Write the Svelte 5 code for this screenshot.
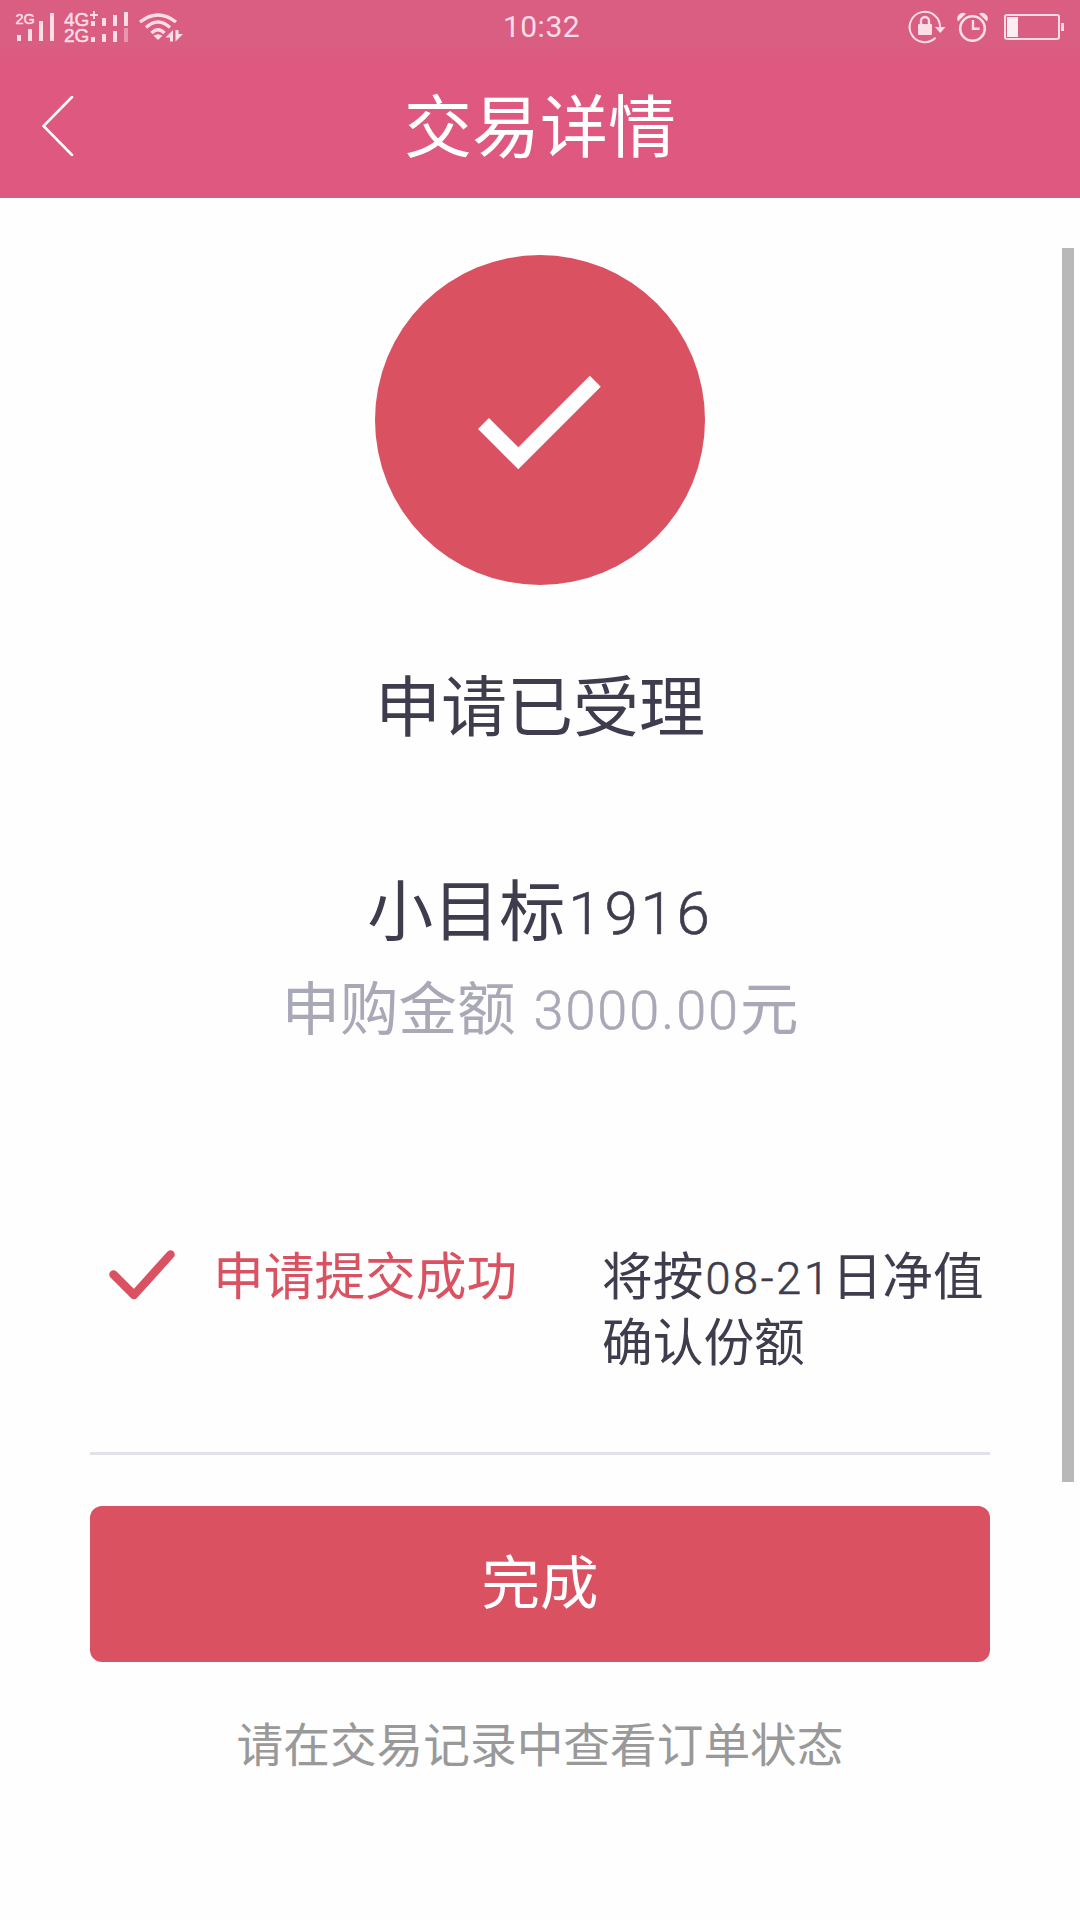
<script>
  const order = {
    name: '小目标',
    code: '1916',
    amount: '3000.00',
  };

  const singleBars = [6, 12, 20, 28];
  const dualBars = [5, 8, 11, 14];
</script>

<div class="page">
  <header>
    <div class="status">
      <svg class="signals" width="200" height="50" viewBox="0 0 200 50">
        <text x="15.500" y="23.500" font-size="14.500">2G</text>
        {#each singleBars as h, i}
          <rect x={17 + i * 11} y={41 - h} width="4" height={h} />
        {/each}
        <text x="64" y="26" font-size="19">4G</text>
        <text x="64" y="42" font-size="19">2G</text>
        <path d="M90 15h8M94 11v8" class="line" stroke-width="1.8" />
        {#each dualBars as h, i}
          <rect x={91 + i * 11} y={26 - h} width="4" height={h} />
          <rect x={91 + i * 11} y={42 - h} width="4" height={h} opacity={i === 3 ? 0.45 : 1} />
        {/each}
        <path d="M140 22Q158 8 176 22M146 27.500Q158 16.500 170 27.500M151.500 33Q158 26.500 164.500 33" class="line" stroke-width="3.4" />
        <path d="M158 40l-4.500-4.200Q158 32.500 162.500 35.800Z" />
        <path d="M165.500 37.500L173 30v11.500h-3v-4zM175.500 30v11.500l7.500-7.500h-4.500v-4z" />
      </svg>
      <span class="time">10:32</span>
      <svg class="icons" width="190" height="50" viewBox="890 0 190 50">
        <path d="M940 28A15.200 15.200 0 1 0 935.500 37.800" class="line" stroke-width="2" />
        <path d="M935 27h10.500l-5.200 6z" />
        <rect x="918" y="24" width="14" height="11" rx="1" />
        <path d="M921 24.500v-3.500a4 4 0 0 1 8 0v3.500" class="line" stroke-width="2.400" />
        <circle cx="972.500" cy="28.500" r="12.300" class="line" stroke-width="2.600" />
        <path d="M973 20v8.700h6.500" class="line" stroke-width="2.400" />
        <path d="M958 21.500a5.800 5.800 0 0 1 8-7.800zM987 21.500a5.800 5.800 0 0 0-8-7.800z" />
        <rect x="1005" y="15" width="54" height="24" rx="2" class="line" stroke-width="2" />
        <rect x="1007" y="17" width="11" height="20" class="charge" />
        <rect x="1061" y="23" width="3" height="8" />
      </svg>
    </div>
    <div class="nav">
      <svg class="back" width="32" height="60" viewBox="0 0 32 60">
        <path d="M30 1L1.500 30l28.500 29" />
      </svg>
      <h1>交易详情</h1>
    </div>
  </header>

  <main>
    <svg class="badge" width="330" height="330" viewBox="0 0 330 330">
      <circle cx="165" cy="165" r="165" />
      <path d="M108.500 168.500L143.300 203.300L220.300 126.300" />
    </svg>

    <h2>申请已受理</h2>
    <div class="name">{order.name}<span class="num">{order.code}</span></div>
    <div class="amount">申购金额<span class="num">{order.amount}</span>元</div>

    <div class="progress">
      <svg class="tick" width="66" height="50" viewBox="0 0 66 50">
        <path d="M4.500 24.500L25 45L61.500 4.500" />
      </svg>
      <div class="done">申请提交成功</div>
      <div class="next">将按<span class="num">08-21</span>日净值<br />确认份额</div>
    </div>

    <button>完成</button>
    <p class="hint">请在交易记录中查看订单状态</p>
    <div class="scrollbar"></div>
  </main>
</div>

<style>
  :global(body) {
    background: #fefefe;
  }

  .page {
    width: 1080px;
    height: 1920px;
    overflow: hidden;
    background: #fefefe;
    color: #3e3c4d;
    font-family: "Noto Sans CJK SC", sans-serif;
    font-weight: 400;
  }

  header {
    height: 198px;
    background: #df587f;
    color: #fff;
  }

  .status {
    display: flex;
    justify-content: space-between;
    height: 60px;
    background: linear-gradient(#d95e82 75%, #df587f);
    color: #fddde8;
  }

  .status svg {
    fill: #fddde8;
  }

  .status text {
    font-family: "Liberation Sans", sans-serif;
    stroke: #fddde8;
    stroke-width: 0.5;
  }

  .status .line {
    fill: none;
    stroke: #fddde8;
  }

  .status .charge {
    fill: #fdeef4;
  }

  .time {
    margin-right: 7px;
    font-family: Roboto, sans-serif;
    font-size: 30px;
    line-height: 54px;
    letter-spacing: 0.5px;
  }

  .nav {
    display: grid;
    grid-template-columns: 120px 1fr 120px;
    align-items: center;
    height: 131px;
  }

  .back {
    margin-left: 42px;
    fill: none;
    stroke: #fff;
    stroke-width: 2.6;
    stroke-linecap: round;
  }

  h1 {
    margin: 0 0 6px;
    font-size: 68px;
    line-height: 100px;
    font-weight: 400;
    text-align: center;
  }

  main {
    position: relative;
    display: flex;
    flex-direction: column;
    align-items: center;
    padding: 57px 90px 0;
  }

  .badge {
    fill: #da5161;
  }

  .badge path {
    fill: none;
    stroke: #fff;
    stroke-width: 15.500;
  }

  h2 {
    margin: 67px 0 0;
    font-size: 66px;
    line-height: 100px;
    font-weight: 400;
  }

  .num {
    font-family: Roboto, sans-serif;
    font-weight: 300;
    line-height: 0;
    vertical-align: 1px;
    -webkit-text-stroke: 0.6px currentColor;
  }

  .name {
    margin-top: 109px;
    font-size: 66px;
    line-height: 90px;
  }

  .name .num {
    margin-left: 3px;
    font-size: 60px;
    letter-spacing: 2.800px;
  }

  .amount {
    margin-top: 9px;
    font-size: 58.500px;
    line-height: 90px;
    color: #a9a8b7;
  }

  .amount .num {
    margin-left: 18px;
    font-size: 54px;
    letter-spacing: 2px;
  }

  .progress {
    display: grid;
    grid-template-columns: 104px 389px 1fr;
    align-items: start;
    box-sizing: border-box;
    width: 900px;
    height: 254px;
    margin-top: 151px;
    padding: 40px 0 0 19px;
    border-bottom: 3px solid #e3e2ea;
    font-size: 50.700px;
    line-height: 65.500px;
  }

  .tick {
    margin-top: 9px;
    fill: none;
    stroke: #da5161;
    stroke-width: 8.500;
    stroke-linecap: round;
    stroke-linejoin: round;
  }

  .done {
    color: #da5161;
  }

  .next {
    white-space: nowrap;
  }

  .next .num {
    margin: 0 0 0 2px;
    font-size: 45px;
    letter-spacing: 2.700px;
  }

  button {
    width: 900px;
    height: 156px;
    margin: 51px 0 0;
    padding: 0 0 12px;
    border: 0;
    border-radius: 12px;
    background: #da5161;
    color: #fff;
    font: inherit;
    font-size: 58.500px;
  }

  .hint {
    margin: 45px 0 0;
    font-size: 46.700px;
    line-height: 70px;
    color: #999;
  }

  .scrollbar {
    position: absolute;
    top: 50px;
    right: 6px;
    width: 12px;
    height: 1234px;
    background: #b8b8b8;
  }
</style>
